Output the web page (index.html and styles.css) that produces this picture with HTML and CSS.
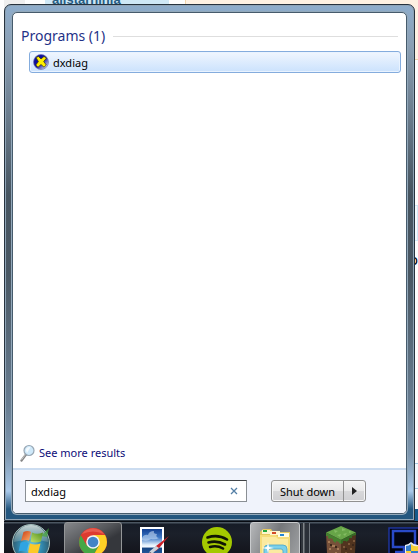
FILE: index.html
```
<!DOCTYPE html>
<html lang="en">
<head>
    <meta charset="UTF-8">
    <meta name="viewport" content="width=device-width, initial-scale=1.0">
    <title>Start menu</title>
    <link rel="stylesheet" href="styles.css">
</head>
<body>
    <!-- web page left open behind the menu -->
    <div class="page-behind">
        <div class="side-column"></div>
        <div class="user-name">allstarninja</div>
        <div class="banner"></div>
        <div class="page-edge">
            <span class="edge-box"></span>
            <span class="edge-text">o</span>
            <span class="edge-band"></span>
            <span class="edge-bottom"></span>
        </div>
    </div>

    <main class="start-menu">
        <div class="menu-panel">
            <section class="results">
                <h1 class="group-title">Programs (1)</h1>
                <a class="result" href="#">
                    <svg width="16" height="16" viewBox="0 0 16 16">
                        <defs>
                            <linearGradient id="dx" x1="0" y1="0" x2="1" y2="1">
                                <stop offset="0.5" stop-color="#10109c"/>
                                <stop offset="0.85" stop-color="#c9cbe8"/>
                            </linearGradient>
                        </defs>
                        <circle cx="8" cy="8" r="7.5" fill="url(#dx)" stroke="#7076b8" stroke-width="0.7"/>
                        <path d="M3 3.5L5.5 2.5L8 5L11 2.5L13.5 4L10.7 7.5L13.3 11L11 13.2L8 10.5L5 13.2L2.8 11L5.4 7.6Z" fill="#ffee00" stroke="#33330a" stroke-width="0.7"/>
                    </svg>
                    <span>dxdiag</span>
                </a>
            </section>
            <a class="more" href="#">
                <svg width="16" height="18" viewBox="0 0 16 18">
                    <path d="M1.5 16.5L6 10.5" stroke="#858585" stroke-width="2.2" stroke-linecap="round"/>
                    <path d="M1.5 15.8L5.5 10.5" stroke="#d5d5d5" stroke-width="0.8"/>
                    <circle cx="9" cy="6.5" r="5" fill="#cfe9fa" stroke="#98a7b4" stroke-width="1.2"/>
                    <path d="M5.8 6A3.5 3.5 0 0 1 10.5 3.2L7 9Z" fill="#fff" opacity="0.75"/>
                </svg>
                <span>See more results</span>
            </a>
            <form class="menu-footer">
                <div class="search">
                    <input type="text" id="search" aria-label="Search programs and files" value="dxdiag">
                    <button type="reset" class="clear" aria-label="Clear">
                        <svg width="8" height="8" viewBox="0 0 8 8"><path d="M1 1L7 7M7 1L1 7" stroke="#547fa6" stroke-width="1.3"/></svg>
                    </button>
                </div>
                <div class="power">
                    <button type="button" class="shutdown">Shut down</button>
                    <button type="button" class="power-more" aria-label="More options">
                        <svg width="5" height="8" viewBox="0 0 5 8"><path d="M0 0L5 4L0 8Z" fill="#222"/></svg>
                    </button>
                </div>
            </form>
        </div>
    </main>

    <nav class="taskbar">
        <button type="button" class="orb" aria-label="Start">
            <svg width="40" height="40" viewBox="0 0 40 40">
                <defs>
                    <radialGradient id="orb" cx="0.5" cy="0.6" r="0.55">
                        <stop offset="0" stop-color="#75d5ed"/>
                        <stop offset="0.55" stop-color="#3187ad"/>
                        <stop offset="1" stop-color="#315563"/>
                    </radialGradient>
                    <linearGradient id="shine" x1="0" y1="0" x2="0" y2="1">
                        <stop offset="0" stop-color="#d9e5e4" stop-opacity="0.9"/>
                        <stop offset="1" stop-color="#b8cdca" stop-opacity="0.25"/>
                    </linearGradient>
                    <linearGradient id="flagRed" x1="0" y1="0" x2="1" y2="1">
                        <stop offset="0" stop-color="#c83b12"/>
                        <stop offset="1" stop-color="#ffb06a"/>
                    </linearGradient>
                    <linearGradient id="flagGreen" x1="1" y1="0" x2="0" y2="1">
                        <stop offset="0" stop-color="#4f8e1d"/>
                        <stop offset="1" stop-color="#c5e36a"/>
                    </linearGradient>
                </defs>
                <circle cx="20" cy="20" r="18.5" fill="url(#orb)" stroke="#a6c0bd"/>
                <path d="M3 19A17 17 0 0 1 37 19Q20 14 3 19Z" fill="url(#shine)"/>
                <path d="M30 13L38 5L36 14Z" fill="#43a53a" opacity="0.7"/>
                <path d="M12.5 9Q17 7 20 9L18 18Q14 16 10 18Z" fill="url(#flagRed)"/>
                <path d="M21 9.5Q26 12 32 9.5L30 18.5Q24 20.5 19.5 18.5Z" fill="url(#flagGreen)"/>
                <path d="M9.5 20Q13 17.5 17.8 20L15.5 28.5Q11 27 7.5 28.5Z" fill="#2fa4e2"/>
                <path d="M19 20.5Q24 22.5 29.5 20.5L27 30Q22 31.5 17 29.5Z" fill="#fcc928"/>
            </svg>
        </button>
        <button type="button" class="task active" aria-label="Chrome">
            <svg width="32" height="32" viewBox="0 0 32 32">
                <circle cx="16" cy="16" r="14" fill="#dd3b2f"/>
                <path d="M3.9 9A14 14 0 0 0 16 30L22.1 19.5L16 16L9.9 19.5Z" fill="#46a745"/>
                <path d="M28.1 9A14 14 0 0 1 16 30L22.1 19.5L16 9Z" fill="#fdd126"/>
                <path d="M3.9 9A14 14 0 0 1 28.1 9H16L9.9 19.5Z" fill="#dd3b2f"/>
                <path d="M5 8A13.4 13.4 0 0 1 27 8Q16 3 5 8Z" fill="#ee7365" opacity="0.6"/>
                <circle cx="16" cy="16" r="6.8" fill="#f5f5f5"/>
                <circle cx="16" cy="16" r="5.3" fill="#4384c6"/>
            </svg>
        </button>
        <button type="button" class="task" aria-label="Paint">
            <svg width="32" height="32" viewBox="0 0 32 32">
                <defs>
                    <linearGradient id="sky" x1="0" y1="0" x2="0" y2="1">
                        <stop offset="0" stop-color="#123f91"/>
                        <stop offset="0.3" stop-color="#3d78c6"/>
                        <stop offset="0.55" stop-color="#e4f1fc"/>
                        <stop offset="0.62" stop-color="#f3f9ff"/>
                        <stop offset="0.66" stop-color="#174583"/>
                        <stop offset="1" stop-color="#2b66ae"/>
                    </linearGradient>
                </defs>
                <path d="M1 1H25V32H1Z" fill="#fff"/>
                <path d="M3 3H23V32H3Z" fill="url(#sky)"/>
                <path d="M3 12Q5 8 9 9Q10 5 15 5Q14 8 18 8Q16 11 20 12Q17 14 12 13Q8 16 3 14Z" fill="#d5e6f7" opacity="0.55"/>
                <path d="M30 10L17 20L14 24L17 25L21 21Z" fill="#cc1f27"/>
                <path d="M17 20L20 22L15 26L11 31L7 32L11 25Z" fill="#cbd3dc"/>
                <path d="M11 26L14 28L10 32H5Z" fill="#534b51"/>
            </svg>
        </button>
        <button type="button" class="task" aria-label="Spotify">
            <svg width="32" height="32" viewBox="0 0 32 32">
                <circle cx="16" cy="16" r="15" fill="#a4c900"/>
                <path d="M6.5 11.5Q17 8 26 13.5M7.5 16.5Q16 14 24 18.5M9 21Q16 19 22 22.5" fill="none" stroke="#101505" stroke-width="2.6" stroke-linecap="round"/>
            </svg>
        </button>
        <button type="button" class="task stacked" aria-label="Explorer">
            <svg width="32" height="32" viewBox="0 0 32 32">
                <path d="M1 32V6L4 3H12L14 6H31V32Z" fill="#e5c860"/>
                <path d="M3 8V4H11V8Z" fill="#fcf6cb"/>
                <path d="M4 4H8V6H4Z" fill="#23a83b"/>
                <path d="M11 9V5H21V9Z" fill="#fff5ce"/>
                <path d="M13 6H17V8H13Z" fill="#d44a26"/>
                <path d="M19 11V7H30V11Z" fill="#fffbe0"/>
                <path d="M21 8H25V10H21Z" fill="#2685d2"/>
                <path d="M1 9H17L19 11H31V32H1Z" fill="#f5dc7a"/>
                <path d="M3 11H17L19 13H29V32H3Z" fill="#fbeaa0"/>
                <path d="M5 32V23Q5 19 9 19H24Q28 19 28 23V32H24V25Q24 23 22 23H11Q9 23 9 25V32Z" fill="#7bd0ea" stroke="#49a5c9" stroke-width="0.8"/>
                <path d="M9 16L10 21L15 22L10 23L9 28L8 23L3 22L8 21Z" fill="#fff"/>
            </svg>
        </button>
        <button type="button" class="task" aria-label="Minecraft">
            <svg width="32" height="32" viewBox="0 0 32 32">
                <path d="M1 7L16 14V32L2 27Z" fill="#765039"/>
                <path d="M31 7L16 14V32L30 27Z" fill="#51341f"/>
                <path d="M16 0L31 6.5L16 14L1 6.5Z" fill="#67a548"/>
                <path d="M1 6.5L16 14V18L14 17V16L11 15V17L8 15V13L5 12V13L3 12V10L1 10Z" fill="#46812f"/>
                <path d="M31 6.5L16 14V18L18 17V15L21 15V16L24 14V12L27 12V10L31 9Z" fill="#366b25"/>
                <path d="M9 4L13 5L10 7ZM17 2L21 4L17 5ZM18 8L22 7L20 10ZM12 9L16 8L15 11ZM24 5L27 6L24 7Z" fill="#83bc62"/>
                <path d="M3 15H5V17H3ZM7 19H10V21H7ZM12 22H14V24H12ZM4 22H6V24H4ZM10 26H12V28H10Z" fill="#a57b57"/>
                <path d="M18 20H20V22H18ZM23 17H25V19H23ZM28 14H30V16H28ZM25 22H27V24H25ZM20 26H22V28H20Z" fill="#7d583a"/>
                <path d="M5 18H7V20H5ZM10 20H12V22H10ZM20 22H22V24H20ZM27 18H29V20H27Z" fill="#3c271a"/>
            </svg>
        </button>
        <button type="button" class="task" aria-label="Remote desktop">
            <svg width="32" height="32" viewBox="0 0 32 32">
                <path d="M2 2H32V32H2Z" fill="#00020b" stroke="#1e359d" stroke-width="1.5"/>
                <path d="M6 5H28V21H6Z" fill="#020411" stroke="#2949c7" stroke-width="2.5"/>
                <path d="M17 21V26M8 26H26" stroke="#2949c7" stroke-width="2.5"/>
                <path d="M24 16Q27 19 31 19V32H18V19Q21 19 24 16Z" fill="#e8edf3"/>
                <path d="M24 18V25H19V20Q22 20 24 18Z" fill="#347bc8"/>
                <path d="M24 18Q27 21 31 20V25H24Z" fill="#f6cf36"/>
                <path d="M19 25H24V32H20Z" fill="#f6cf36"/>
                <path d="M24 25H31V32H24Z" fill="#347bc8"/>
            </svg>
        </button>
    </nav>
</body>
</html>
```

FILE: styles.css
```
* {
    box-sizing: border-box;
}

body {
    margin: 0;
    padding: 4px 0 0 4px;
    min-height: 100vh;
    display: flex;
    flex-direction: column;
    position: relative;
    overflow: hidden;
    background-color: #fdfdfd;
    font-family: "Noto Sans", sans-serif;
    font-size: 11px;
}

button {
    margin: 0;
    padding: 0;
    border: none;
    background: none;
    font: inherit;
}

svg {
    display: block;
    flex-shrink: 0;
}

a {
    text-decoration: none;
}

/* page behind */
.page-behind {
    position: absolute;
    inset: 0;
    overflow: hidden;
}

.side-column {
    position: absolute;
    left: 4px;
    top: 0;
    width: 21px;
    height: 12px;
    background-color: #eeeeee;
}

.user-name {
    position: absolute;
    left: 45px;
    top: -10px;
    width: 124px;
    height: 20px;
    padding-left: 7px;
    background-color: #cfe8f6;
    color: #285d83;
    font-family: "Liberation Sans", Arial, sans-serif;
    font-size: 13px;
    font-weight: bold;
    line-height: 20px;
}

.banner {
    position: absolute;
    left: 185px;
    right: 0;
    top: 0;
    height: 60px;
    background-color: #fef1e2;
    border-left: 1px solid #f2d6ac;
    border-bottom: 1px solid #f2d6ac;
}

.page-edge {
    position: absolute;
    right: 0;
    top: 0;
    bottom: 0;
    width: 8px;
}

.edge-box {
    position: absolute;
    top: 205px;
    width: 8px;
    height: 36px;
    border: 1px solid #d3e8f7;
    background-color: #f4f9fd;
}

.edge-text {
    position: absolute;
    top: 252px;
    right: 0;
    font-size: 14px;
    line-height: 16px;
}

.edge-band {
    position: absolute;
    bottom: 64px;
    width: 8px;
    height: 26px;
    border-top: 1px solid #a5c8e3;
    border-bottom: 1px solid #a5c8e3;
    background-color: #f4f8fd;
}

.edge-bottom {
    position: absolute;
    bottom: 0;
    width: 8px;
    height: 44px;
    background-color: #17598a;
}

/* start menu */
.start-menu {
    flex: 1;
    display: flex;
    position: relative;
    margin-right: 3px;
    padding: 7px 7px 6px;
    border: 1px solid #26323e;
    border-radius: 7px 7px 0 0;
    background: linear-gradient(#8eadcc 0, #8b9fb4 40px, #465460 190px, #495763 270px, #687d91 400px, #7f98b0 450px, #a9c9ea 486px, #24577f 504px);
    box-shadow: inset 0 0 0 1px #8ea3b5;
}

.start-menu::after {
    content: "";
    position: absolute;
    left: 22px;
    right: 1px;
    bottom: 1px;
    height: 4px;
    background-color: #24577f;
}

.menu-panel {
    flex: 1;
    display: flex;
    flex-direction: column;
    overflow: hidden;
    border: 1px solid #465b6c;
    border-radius: 5px;
    background-color: #ffffff;
    box-shadow: 0 0 0 1px #93a9bb;
}

.results {
    flex: 1;
    padding: 13px 5px 0 8px;
}

.group-title {
    display: flex;
    align-items: center;
    gap: 8px;
    margin: 0 3px 5px 0;
    color: #1f3287;
    font-size: 14px;
    font-weight: normal;
    line-height: 20px;
}

.group-title::after {
    content: "";
    flex: 1;
    height: 1px;
    background-color: #dedede;
}

.result {
    display: flex;
    align-items: center;
    gap: 4px;
    height: 22px;
    margin-left: 8px;
    padding: 0 3px;
    border: 1px solid #84acdd;
    border-radius: 3px;
    background: linear-gradient(#f0f6fe, #cbe2fd);
    box-shadow: inset 0 0 0 1px #e9f3ff;
    color: #000000;
}

.more {
    display: flex;
    align-items: center;
    gap: 3px;
    padding: 0 7px 6px;
    color: #0c0c78;
    line-height: 18px;
}

.menu-footer {
    display: flex;
    align-items: flex-start;
    gap: 24px;
    padding: 10px 12px 11px;
    border-top: 2px solid #cbdcf0;
    background-color: #f0f3fb;
}

.search {
    display: flex;
    align-items: center;
    width: 222px;
    height: 22px;
    padding-right: 8px;
    border: 1px solid #8a8f94;
    border-top-color: #3f4245;
    background-color: #ffffff;
}

.search input {
    flex: 1;
    min-width: 0;
    padding: 0 5px;
    border: none;
    outline: none;
    background: none;
    font: inherit;
    color: #000000;
}

.power {
    display: flex;
    height: 22px;
    border: 1px solid #919191;
    border-radius: 3px;
    background: linear-gradient(#f5f5f5 0, #e9e9ea 48%, #d8d8da 50%, #cfcfd2 100%);
    box-shadow: inset 0 0 0 1px #f7f7f7;
}

.shutdown {
    width: 71px;
}

.power-more {
    display: flex;
    align-items: center;
    justify-content: center;
    width: 22px;
    border-left: 1px solid #919191;
}

/* taskbar */
.taskbar {
    display: flex;
    gap: 4px;
    position: relative;
    height: 32px;
    overflow: hidden;
    border-top: 1px solid #070b12;
    background: linear-gradient(#4b5661 0, #4b5661 1px, #161c27 2px, #1b202a 12px, #14151c 100%);
}

.orb {
    flex-shrink: 0;
    width: 56px;
    height: 40px;
    padding: 1px 0 0 7px;
}

.task {
    display: flex;
    flex-shrink: 0;
    justify-content: center;
    width: 58px;
    height: 40px;
    padding-top: 3px;
    border: 1px solid transparent;
}

.active {
    border-color: #949698;
    border-radius: 3px;
    background: linear-gradient(150deg, #85878a 0, #55575b 40%, #35373c 60%);
}

.stacked {
    position: relative;
    width: 50px;
    margin-right: 8px;
    border-color: #c9cbcd;
    border-radius: 3px;
    background: linear-gradient(110deg, #b5b7b9 0, #75777a 50%, #a2a4a6 100%);
}

/* edges of the other windows in the group */
.stacked::after {
    content: "";
    position: absolute;
    left: 50px;
    top: 0;
    width: 6px;
    height: 40px;
    border-left: 2px solid #30353c;
    border-right: 1px solid #6f757c;
    background: linear-gradient(90deg, #7f8488 1px, #2b3038 2px);
}
```
